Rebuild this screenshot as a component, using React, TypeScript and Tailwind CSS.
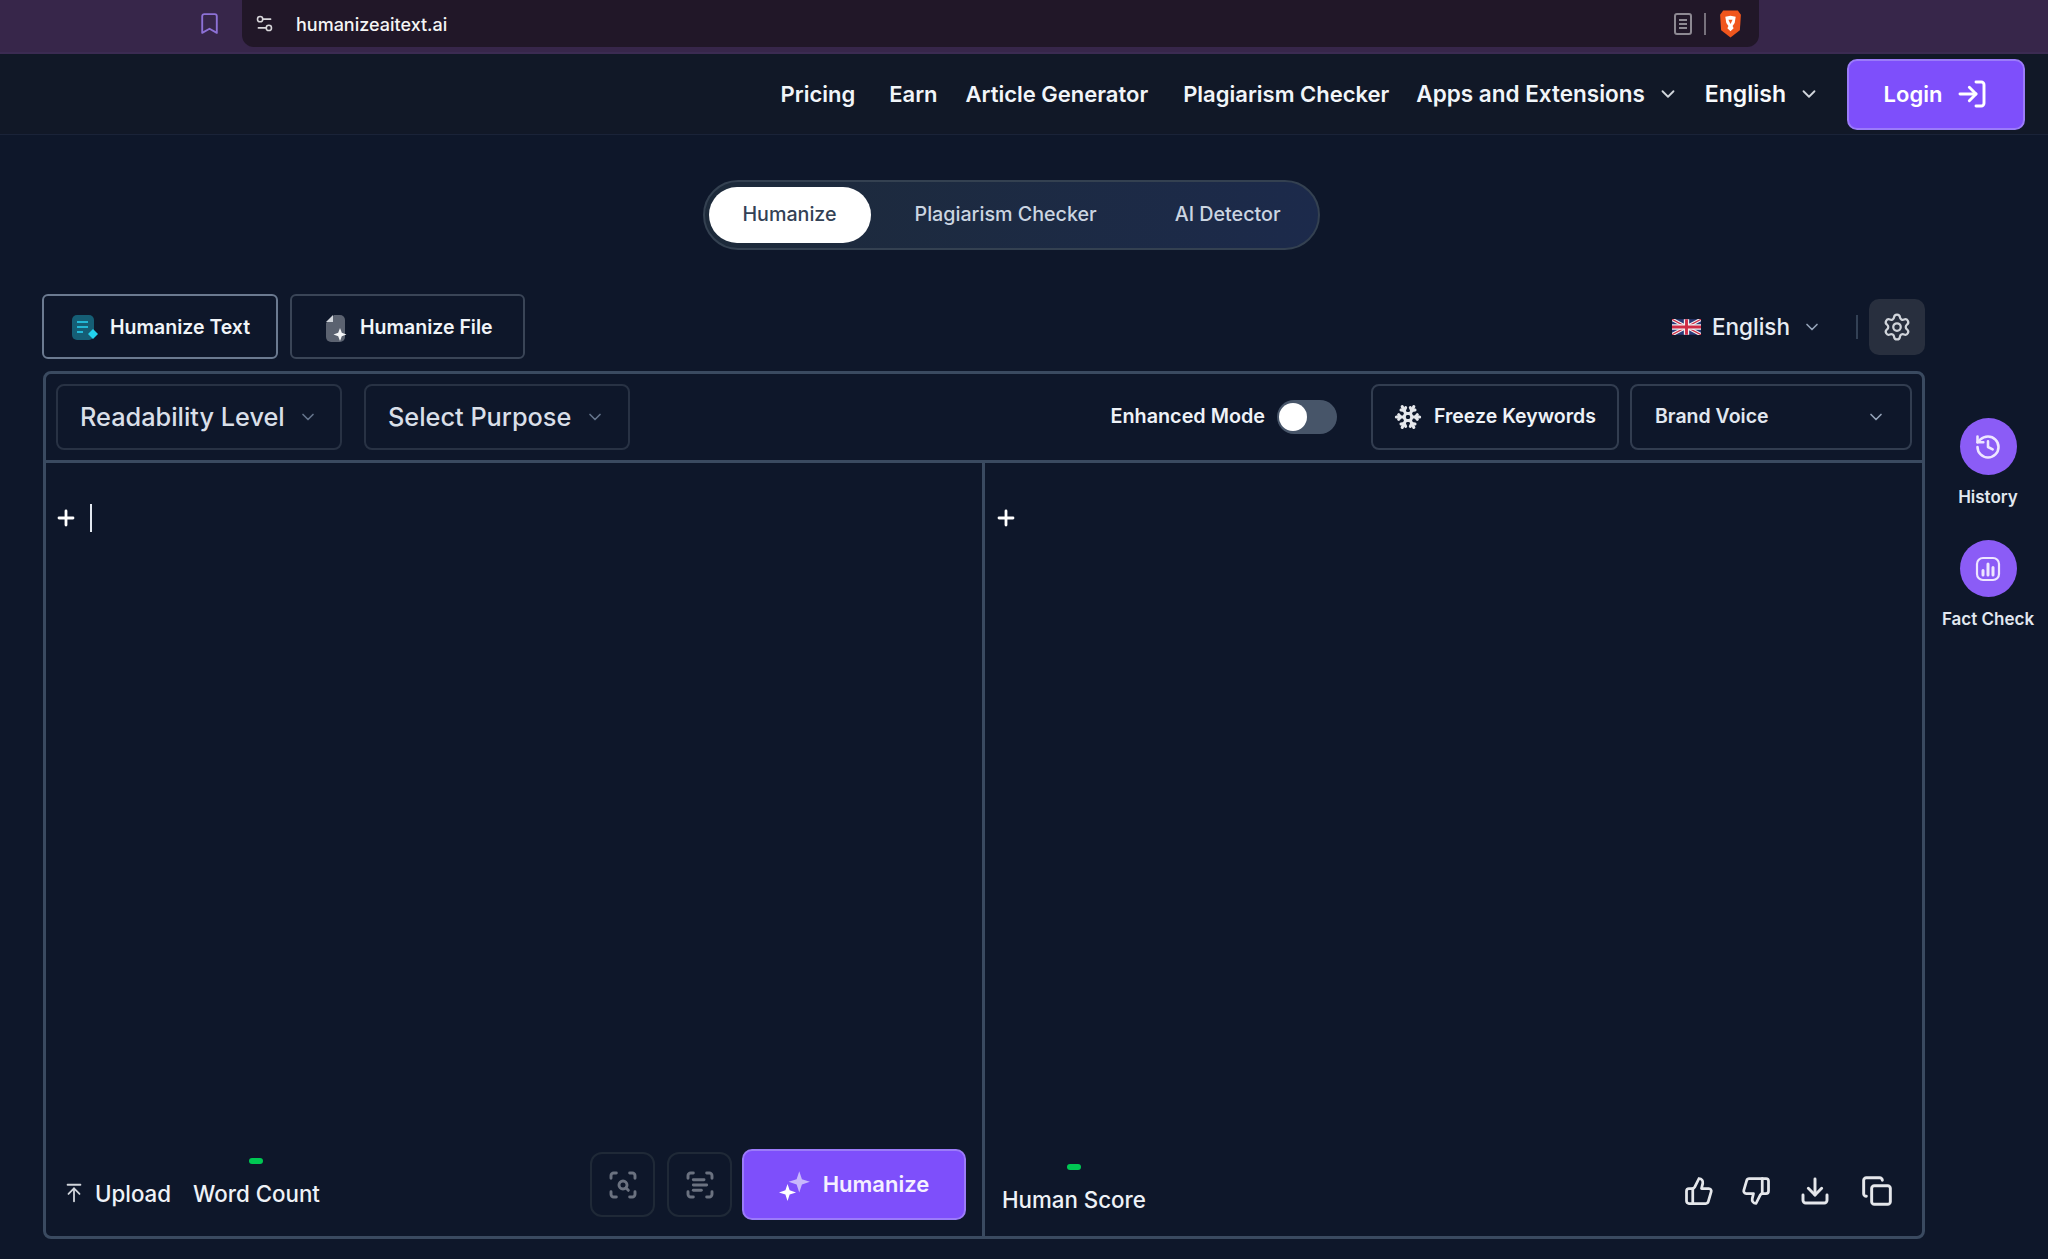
import React from 'react';
import {
  ArrowUpToLine,
  Bookmark,
  ChevronDown,
  Copy,
  Download,
  History,
  LogIn,
  Plus,
  ScanSearch,
  ScanText,
  Settings,
  Settings2,
  Snowflake,
  ThumbsDown,
  ThumbsUp,
} from 'lucide-react';

const BraveLogo = () => (
  <svg width="25" height="30" viewBox="0 0 24 28">
    <path d="M5 1h14l3 4-1 15-9 7-9-7L2 5z" fill="#f0561d" />
    <path d="M7 7l5-1 5 1-1 6-2 3 1 2-3 3-3-3 1-2-2-3z" fill="#ffffff" />
    <path d="M10 10h4l-2 4z" fill="#f0561d" />
  </svg>
);

const ReaderIcon = () => (
  <svg width="18" height="22" viewBox="0 0 18 22" fill="none" stroke="#8d8992" strokeWidth="2">
    <rect x="1" y="1" width="16" height="20" rx="2" />
    <path d="M5 7h8M5 11h8M5 15h8" />
  </svg>
);

const UkFlag = () => (
  <svg width="29" height="16" viewBox="0 0 60 32">
    <rect width="60" height="32" fill="#2a3a78" />
    <path d="M0 0l60 32M60 0L0 32" stroke="#f2f2f2" strokeWidth="7" />
    <path d="M0 0l60 32M60 0L0 32" stroke="#cf2b45" strokeWidth="2.5" />
    <path d="M30 0v32M0 16h60" stroke="#f2f2f2" strokeWidth="11" />
    <path d="M30 0v32M0 16h60" stroke="#cf2b45" strokeWidth="6" />
  </svg>
);

const TextFileIcon = () => (
  <svg width="30" height="30" viewBox="0 0 30 30">
    <rect x="2" y="2" width="22" height="25" rx="5" fill="#155e75" />
    <path d="M7 9h11M7 14h11M7 19h6" stroke="#22b8d6" strokeWidth="2" />
    <path d="M23 16l5 5-5 5-5-5z" fill="#22d3ee" />
  </svg>
);

const FileIcon = () => (
  <svg width="28" height="30" viewBox="0 0 28 30">
    <path d="M12 2h6a5 5 0 0 1 5 5v17a5 5 0 0 1-5 5H9a5 5 0 0 1-5-5V10z" fill="#5b6270" />
    <path d="M11 2v7H4z" fill="#d1d5db" />
    <path d="M18 15l1.800 4.700 4.700 1.800-4.700 1.800-1.800 4.700-1.800-4.700-4.700-1.800 4.700-1.800z" fill="#f3f4f6" />
  </svg>
);

const SparkIcon = () => (
  <svg width="32" height="32" viewBox="0 0 30 30">
    <path d="M19 2l2.500 7.500L29 12l-7.500 2.500L19 22l-2.500-7.500L9 12l7.500-2.500z" fill="#c9b8fc" />
    <path d="M8 14l2 6 6 2-6 2-2 6-2-6-6-2 6-2z" fill="#ffffff" />
  </svg>
);

const ChartIcon = () => (
  <svg width="26" height="26" viewBox="0 0 26 26" fill="none" stroke="#eee6ff" strokeWidth="2.200" strokeLinecap="round">
    <rect x="2" y="2" width="22" height="22" rx="6" />
    <path d="M8 14.500v4.500M13 8v11M18 11.500v7.500" strokeWidth="3" />
  </svg>
);

const NavLink = ({ label, className }: { label: string; className: string }) => (
  <a className={`font-semibold text-[#f1f5f9] ${className}`}>{label}</a>
);

const SideAction = ({ label, children }: { label: string; children: React.ReactNode }) => (
  <div className="flex h-[94px] w-[100px] flex-col items-center">
    <div className="flex h-[57px] w-[57px] items-center justify-center rounded-full bg-[#8b5cf6]">{children}</div>
    <span className="mt-[10px] text-[17px] font-semibold leading-[24px] text-[#e2e8f0]">{label}</span>
  </div>
);

const App = () => {
  return (
    <div className="flex h-[1259px] w-[2048px] flex-col overflow-hidden bg-[#0e172a] font-['Inter',sans-serif]">
      {/* browser chrome */}
      <div className="h-[54px] shrink-0 border-b-2 border-[#3b2b52] bg-[#37264a]">
        <div className="flex h-[47px] items-center">
          <div className="flex w-[242px] justify-end pr-[20px]">
            <Bookmark size={25} strokeWidth={1.800} className="text-[#8d71d6]" />
          </div>
          <div className="flex h-[47px] w-[1517px] items-center rounded-b-[12px] bg-[#211728]">
            <Settings2 size={21} strokeWidth={1.800} className="ml-[12px] text-[#d8d6da]" />
            <span className="ml-[21px] pt-[2px] text-[18px] font-medium text-[#f5f5f5]">humanizeaitext.ai</span>
            <div className="ml-auto mr-[16px] flex items-center gap-[12px]">
              <ReaderIcon />
              <div className="h-[22px] w-[2px] bg-[#77717c]" />
              <BraveLogo />
            </div>
          </div>
        </div>
      </div>

      {/* nav */}
      <header className="flex h-[81px] shrink-0 items-center justify-end border-b border-[#1a2338] bg-[#111827] pr-[23px]">
        <NavLink label="Pricing" className="text-[22px]" />
        <NavLink label="Earn" className="ml-[34px] text-[22px]" />
        <NavLink label="Article Generator" className="ml-[28px] text-[22px]" />
        <NavLink label="Plagiarism Checker" className="ml-[35px] text-[22px]" />
        <NavLink label="Apps and Extensions" className="ml-[27px] text-[22.5px]" />
        <ChevronDown size={22} className="ml-[12px] text-[#d1d5db]" />
        <a className="ml-[26px] text-[23px] font-semibold text-[#f8fafc]">English</a>
        <ChevronDown size={22} className="ml-[12px] text-[#d1d5db]" />
        <button className="ml-[27px] flex h-[71px] w-[178px] items-center justify-center gap-[14px] rounded-[10px] border-2 border-[#9b7bf9] bg-[#7e4ffb] text-[22px] font-semibold text-white">
          Login
          <LogIn size={32} strokeWidth={2.200} />
        </button>
      </header>

      <div className="flex min-h-0 flex-1">
        <main className="ml-[43px] flex w-[1882px] flex-col">
          {/* page tabs */}
          <div className="mt-[45px] flex justify-center pl-[54px]">
            <div className="flex h-[70px] w-[617px] items-center rounded-full border-2 border-[#344151] bg-gradient-to-r from-[#1d2a3a] to-[#1c2a4b] pl-[4px]">
              <span className="flex h-[56px] w-[162px] items-center justify-center rounded-full bg-white text-[19.7px] font-medium text-[#334155]">
                Humanize
              </span>
              <span className="ml-[44px] text-[19.7px] font-medium text-[#cbd5e1]">Plagiarism Checker</span>
              <span className="ml-[78px] text-[19.7px] font-medium text-[#cbd5e1]">AI Detector</span>
            </div>
          </div>

          {/* mode row */}
          <div className="mt-[44px] flex h-[65px] items-center -ml-px">
            <button className="flex h-[65px] w-[236px] items-center gap-[10px] rounded-[6px] border-2 border-[#6b7a90] pl-[26px] pt-[2px] text-[19.5px] font-semibold text-[#f1f5f9]">
              <TextFileIcon />
              Humanize Text
            </button>
            <button className="ml-[12px] flex h-[65px] w-[235px] items-center gap-[10px] rounded-[6px] border-2 border-[#3a4557] pl-[30px] pt-[2px] text-[19.5px] font-semibold text-[#f1f5f9]">
              <FileIcon />
              Humanize File
            </button>
            <div className="ml-auto flex items-center">
              <UkFlag />
              <span className="ml-[11px] text-[22.5px] font-medium text-[#e8edf4]">English</span>
              <ChevronDown size={20} className="ml-[12px] text-[#94a3b8]" />
              <div className="ml-[34px] h-[24px] w-[2px] bg-[#334155]" />
              <div className="ml-[11px] flex h-[56px] w-[56px] items-center justify-center rounded-[10px] bg-[#282f3e]">
                <Settings size={30} strokeWidth={1.800} className="text-[#d1d5db]" />
              </div>
            </div>
          </div>

          {/* editor */}
          <section className="mt-[12px] flex h-[868px] flex-col rounded-[8px] border-[3px] border-[#3a4a60]">
            <div className="flex h-[89px] shrink-0 items-center border-b-[3px] border-[#3a4a60] pl-[10px] pr-[10px]">
              <button className="flex h-[66px] w-[286px] items-center rounded-[8px] border-2 border-[#283244] pl-[22px] text-[25.3px] font-medium text-[#d9dfe8]">
                Readability Level
                <ChevronDown size={20} className="ml-[13px] text-[#64748b]" />
              </button>
              <button className="ml-[22px] flex h-[66px] w-[266px] items-center rounded-[8px] border-2 border-[#283244] pl-[22px] text-[25.3px] font-medium text-[#d9dfe8]">
                Select Purpose
                <ChevronDown size={20} className="ml-[14px] text-[#64748b]" />
              </button>
              <span className="ml-auto text-[19.8px] font-semibold text-[#eef2f7]">Enhanced Mode</span>
              <div className="ml-[12px] flex h-[34px] w-[60px] items-center rounded-full bg-[#475569] pl-[2px]">
                <div className="h-[28px] w-[28px] rounded-full bg-white" />
              </div>
              <button className="ml-[34px] flex h-[66px] w-[248px] items-center rounded-[8px] border-2 border-[#323d50] pl-[21px] text-[19.5px] font-semibold text-[#eef2f7]">
                <Snowflake size={28} strokeWidth={2.600} className="text-[#e5e7eb]" />
                <span className="ml-[12px]">Freeze Keywords</span>
              </button>
              <button className="ml-[11px] flex h-[66px] w-[282px] items-center justify-between rounded-[8px] border-2 border-[#323d50] pl-[23px] pr-[24px] text-[19.5px] font-semibold text-[#e2e8f0]">
                Brand Voice
                <ChevronDown size={20} className="text-[#94a3b8]" />
              </button>
            </div>

            <div className="flex min-h-0 flex-1">
              {/* input pane */}
              <div className="flex w-[939px] shrink-0 flex-col border-r-[3px] border-[#3a4a60]">
                <div className="mt-[33px] flex h-[44px] items-center pl-[8px]">
                  <Plus size={24} strokeWidth={2.800} className="text-white" />
                  <div className="ml-[12px] h-[28px] w-[2px] bg-[#e2e8f0]" />
                </div>
                <div className="mt-auto flex items-end pb-[16px] pl-[17px] pr-[16px]">
                  <div className="flex items-end pb-[10px]">
                    <div className="flex items-center">
                      <ArrowUpToLine size={22} strokeWidth={2} className="text-[#d1d5db]" />
                      <span className="ml-[10px] text-[22.3px] font-medium text-[#eef2f7]">Upload</span>
                    </div>
                    <div className="relative ml-[22px]">
                      <div className="absolute -top-[19px] left-1/2 h-[6px] w-[14px] -translate-x-1/2 rounded-full bg-[#00c853]" />
                      <span className="text-[22.3px] font-medium text-[#eef2f7]">Word Count</span>
                    </div>
                  </div>
                  <div className="ml-auto flex items-center gap-[12px]">
                    <div className="flex h-[65px] w-[65px] items-center justify-center rounded-[12px] border-2 border-[#1f2937]">
                      <ScanSearch size={32} strokeWidth={2.200} className="text-[#6b7280]" />
                    </div>
                    <div className="flex h-[65px] w-[65px] items-center justify-center rounded-[12px] border-2 border-[#1f2937]">
                      <ScanText size={32} strokeWidth={2.200} className="text-[#6b7280]" />
                    </div>
                    <button className="-ml-[2px] flex h-[71px] w-[224px] items-center justify-center gap-[12px] rounded-[10px] border-2 border-[#9b7bf9] bg-[#7e4ffb] text-[22px] font-semibold text-[#f5f0ff]">
                      <SparkIcon />
                      Humanize
                    </button>
                  </div>
                </div>
              </div>

              {/* output pane */}
              <div className="flex min-w-0 flex-1 flex-col">
                <div className="mt-[33px] flex h-[44px] items-center pl-[9px]">
                  <Plus size={24} strokeWidth={2.800} className="text-white" />
                </div>
                <div className="mt-auto flex items-end justify-between pb-[20px] pl-[17px] pr-[29px]">
                  <div className="relative">
                    <div className="absolute -top-[19px] left-1/2 h-[6px] w-[14px] -translate-x-1/2 rounded-full bg-[#00c853]" />
                    <span className="text-[22.3px] font-medium text-[#eef2f7]">Human Score</span>
                  </div>
                  <div className="flex items-center gap-[27px] pb-[9px] text-[#e5e7eb]">
                    <ThumbsUp size={30} strokeWidth={2.200} />
                    <ThumbsDown size={30} strokeWidth={2.200} />
                    <Download size={32} strokeWidth={2.200} className="ml-[1px]" />
                    <Copy size={32} strokeWidth={2.200} className="ml-[3px]" />
                  </div>
                </div>
              </div>
            </div>
          </section>
        </main>

        {/* side actions */}
        <aside className="ml-[13px] flex flex-col gap-[28px] pt-[283px]">
          <SideAction label="History">
            <History size={28} strokeWidth={2.200} className="text-[#eee6ff]" />
          </SideAction>
          <SideAction label="Fact Check">
            <ChartIcon />
          </SideAction>
        </aside>
      </div>
    </div>
  );
};

export default App;
